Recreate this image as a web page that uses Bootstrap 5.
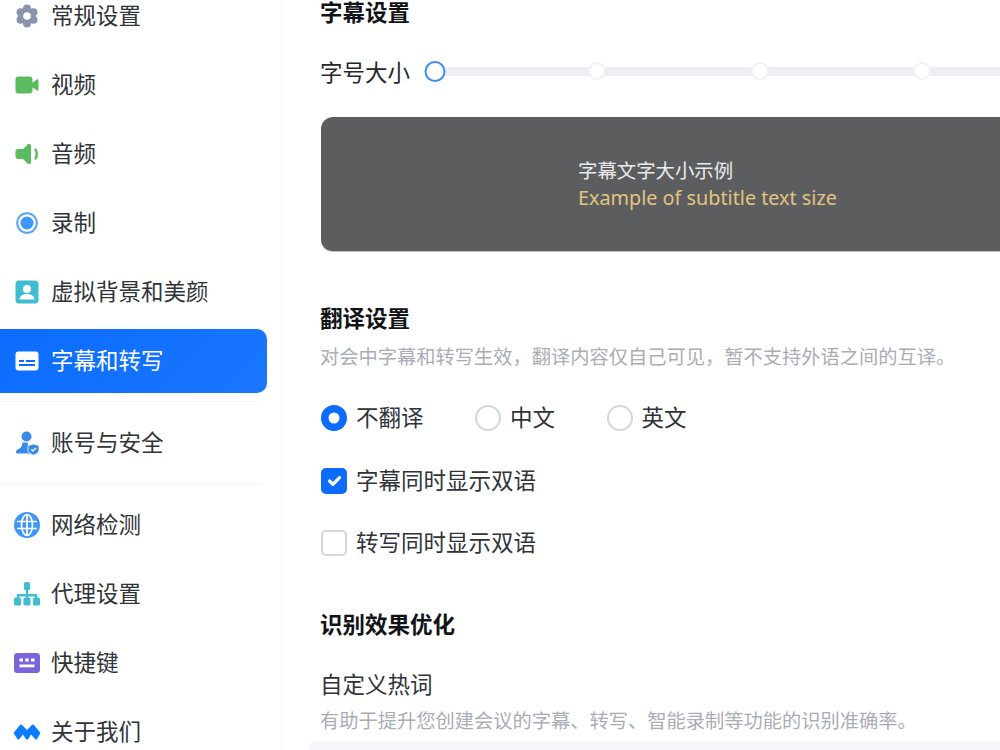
<!DOCTYPE html>
<html lang="zh-CN">
<head>
<meta charset="utf-8">
<title>字幕和转写</title>
<link href="https://cdn.jsdelivr.net/npm/bootstrap@5.3.0/dist/css/bootstrap.min.css" rel="stylesheet">
<style>
html,body{height:750px;overflow:hidden;background:#fff}
body{font-family:"Noto Sans","Noto Sans CJK SC",sans-serif;color:#26282c;font-size:22.5px;line-height:32px}
.shell{height:750px;overflow:hidden}
.side-pane{width:282px;flex:none;border-right:1px solid #f3f4f6;margin-top:-16px;padding-right:14px}
.side-row{height:64px;margin-bottom:5px;gap:12px;padding-left:15px;color:#303338}
.side-row.is-on{background:linear-gradient(135deg,#0b6cff,#1a76ff);color:#fff;border-radius:0 10px 10px 0}
.side-row svg{width:24px;height:24px;flex:none;overflow:visible}
.side-line{height:1px;background:#f5f6f7;margin:8px 4px 9px 0}
.main-pane{padding-left:39px;min-width:0;flex:1}
.sec-title{font-weight:700;font-size:22.5px;line-height:26px;color:#111317;margin-left:-1px}
.size-row{margin-top:31px;height:32px}
.size-label{width:115px;flex:none;margin-left:-1px}
.track-wrap{flex:1;height:32px;margin-right:-400px}
.track-bar{position:absolute;left:0;right:0;top:10px;height:9px;background:#eceef2}
.dot{position:absolute;top:5px;width:18px;height:18px;border-radius:50%;background:#fff;border:2px solid #f1f2f5;transform:translateX(-9px)}
.dot.is-cur{top:4px;width:21px;height:21px;border:2px solid #3d8bfd;transform:translateX(-10.5px)}
.sample-box{margin-top:28px;margin-right:-200px;height:135px;background:#5c5d5f;border-radius:12px 0 0 12px;border-bottom:1px solid #c6c7c9;padding:40px 0 0 257px;color:#e9ebee;font-size:19.4px;line-height:27px}
.sample-en{color:#e3c57f;font-size:19.8px;font-family:"Noto Sans",sans-serif}
.hint{color:#a9adb5;font-size:19.25px;line-height:28px;margin-left:-1px;margin-top:11px}
.sec2{margin-top:54px}
.opt-row{margin-top:31px;height:32px}
.opt{display:flex;align-items:center;margin:0;padding:0;min-height:0}
.opt .form-check-input{width:26px;height:26px;margin:0 9px 0 0;float:none;flex:none;border:2px solid #d3d6dd}
.opt .form-check-input:checked{background-color:#0b6cff;border-color:#0b6cff}
.opt .form-check-label{color:#303338}
.opt-row .opt + .opt{margin-left:51.5px}
.chk-row{margin-top:31px;height:32px}
.chk-row.second{margin-top:30px}
.chk-row .form-check-input{border-radius:5px}
.sec3{margin-top:53px}
.plain-label{margin-top:31px;color:#303338;margin-left:-1px}
.hint.tight{margin-top:6px}
.field-strip{height:12px;background:#f6f7fa;border-radius:8px 0 0 0;margin:6px -200px 0 -12px}
</style>
</head>
<body>
<div class="d-flex shell">
  <nav class="side-pane">
    <div class="side-row d-flex align-items-center">
      <svg viewBox="0 0 24 24"><g fill="#8a93ac"><circle cx="12" cy="12" r="8.500"/><circle cx="12" cy="4.500" r="4"/><circle cx="12" cy="19.500" r="4"/><circle cx="5.500" cy="8.200" r="4"/><circle cx="18.500" cy="8.200" r="4"/><circle cx="5.500" cy="15.800" r="4"/><circle cx="18.500" cy="15.800" r="4"/></g><circle cx="12" cy="12" r="3.800" fill="#fff"/></svg>
      <span>常规设置</span>
    </div>
    <div class="side-row d-flex align-items-center">
      <svg viewBox="0 0 24 24"><rect x="0.500" y="3.500" width="17" height="17" rx="3" fill="#5abb5f"/><path fill="#5abb5f" d="M17 10l5-3.500c.8-.5 1.500-.1 1.500.8v9.400c0 .9-.7 1.300-1.500.8L17 14z"/></svg>
      <span>视频</span>
    </div>
    <div class="side-row d-flex align-items-center">
      <svg viewBox="0 0 24 24"><path fill="#5abb5f" d="M0.500 9.500c0-1.500 1-2.500 2.500-2.500H8L12.500 2.500c1.500-1.300 3.500-.8 3.500 1.500v16c0 2.300-2 2.800-3.500 1.500L8 17H3c-1.500 0-2.500-1-2.500-2.500z"/><path fill="none" stroke="#5abb5f" stroke-width="2.400" stroke-linecap="round" d="M20.500 7.500c1.700 3 1.700 6 0 9"/></svg>
      <span>音频</span>
    </div>
    <div class="side-row d-flex align-items-center">
      <svg viewBox="0 0 24 24"><circle cx="12" cy="12" r="9.800" fill="none" stroke="#5aa6f5" stroke-width="2"/><circle cx="12" cy="12" r="6.500" fill="#3f97f5"/></svg>
      <span>录制</span>
    </div>
    <div class="side-row d-flex align-items-center">
      <svg viewBox="0 0 24 24"><rect x="0.500" y="0.500" width="23" height="23" rx="3.500" fill="#41bdd2"/><circle cx="12" cy="9" r="4" fill="#fff"/><path fill="#fff" d="M4.500 19.500c.5-4 3.500-5.500 7.500-5.500s7 1.500 7.500 5.500z"/></svg>
      <span>虚拟背景和美颜</span>
    </div>
    <div class="side-row is-on d-flex align-items-center">
      <svg viewBox="0 0 24 24"><rect x="0.500" y="2.500" width="23" height="19" rx="3" fill="#fff"/><rect x="4" y="11" width="5" height="2" fill="#0b6cff"/><rect x="11" y="11" width="9" height="2" fill="#0b6cff"/><rect x="4" y="15" width="16" height="2" fill="#0b6cff"/></svg>
      <span>字幕和转写</span>
    </div>
    <div class="side-line"></div>
    <div class="side-row d-flex align-items-center">
      <svg viewBox="0 0 24 24"><circle cx="11.500" cy="5.500" r="5" fill="#3a8be8"/><path fill="#3a8be8" d="M1 21c0-1.500 1-2.500 3-3.300 2-.8 3-2.200 3.400-6.200h5.200c.2 2 .8 3.400 2 4.300v4.700c0 .7.100 1.400.3 2H3c-1.200 0-2-.4-2-1.500z"/><path fill="#3a8be8" d="M18.500 13l5.500 1.500v4.700c0 2.500-2.800 4-5.500 5-2.700-1-5.500-2.500-5.500-5v-4.700z" stroke="#fff" stroke-width="0.800"/><path fill="none" stroke="#fff" stroke-width="1.300" d="M16.300 18.300l1.700 1.700 2.900-3"/></svg>
      <span>账号与安全</span>
    </div>
    <div class="side-line"></div>
    <div class="side-row d-flex align-items-center">
      <svg viewBox="0 0 24 24"><circle cx="12" cy="12" r="13" fill="#3f97f5"/><g fill="none" stroke="#fff" stroke-width="1.700"><ellipse cx="12" cy="12" rx="5.500" ry="10.500"/><path d="M12 1.500v21M2 8.500h20M2 15.500h20"/></g></svg>
      <span>网络检测</span>
    </div>
    <div class="side-row d-flex align-items-center">
      <svg viewBox="0 0 24 24"><rect x="9" y="0" width="6" height="8" rx="1.500" fill="#41bdd2"/><path fill="none" stroke="#41bdd2" stroke-width="2.400" d="M12 8v8M3 17v-3.800h18V17"/><rect x="-1" y="15.500" width="7" height="8" rx="1.500" fill="#41bdd2"/><rect x="8.500" y="15.500" width="7" height="8" rx="1.500" fill="#41bdd2"/><rect x="18" y="15.500" width="7" height="8" rx="1.500" fill="#41bdd2"/></svg>
      <span>代理设置</span>
    </div>
    <div class="side-row d-flex align-items-center">
      <svg viewBox="0 0 24 24"><rect x="-1" y="2" width="26" height="20" rx="3.500" fill="#7a63dc"/><g fill="#fff"><rect x="4.500" y="7.500" width="3.500" height="3"/><rect x="10.200" y="7.500" width="3.500" height="3"/><rect x="16" y="7.500" width="3.500" height="3"/><rect x="4.500" y="13.500" width="15" height="2.800"/></g></svg>
      <span>快捷键</span>
    </div>
    <div class="side-row d-flex align-items-center">
      <svg viewBox="0 0 24 24"><path fill="#0b7cff" d="M-1.500 13L5 5c.6-.7 1.500-.7 2.100 0l4.900 5 4.900-5c.6-.7 1.500-.7 2.100 0l6.500 8-3.500 6c-.5.7-1.300.7-1.900 0L16 14.500l-2.800 4.500c-.6.800-1.800.8-2.400 0L8 14.500 4.400 19c-.6.700-1.400.7-1.900 0z"/></svg>
      <span>关于我们</span>
    </div>
  </nav>
  <main class="main-pane">
    <div class="sec-title">字幕设置</div>
    <div class="size-row d-flex align-items-center">
      <span class="size-label">字号大小</span>
      <div class="track-wrap position-relative">
        <div class="track-bar"></div>
        <span class="dot is-cur" style="left:0"></span>
        <span class="dot" style="left:162px"></span>
        <span class="dot" style="left:325px"></span>
        <span class="dot" style="left:487px"></span>
      </div>
    </div>
    <div class="sample-box">
      <div>字幕文字大小示例</div>
      <div class="sample-en">Example of subtitle text size</div>
    </div>
    <div class="sec-title sec2">翻译设置</div>
    <div class="hint">对会中字幕和转写生效，翻译内容仅自己可见，暂不支持外语之间的互译。</div>
    <div class="opt-row d-flex align-items-center">
      <div class="form-check opt"><input class="form-check-input" type="radio" name="lang" id="l1" checked><label class="form-check-label" for="l1">不翻译</label></div>
      <div class="form-check opt"><input class="form-check-input" type="radio" name="lang" id="l2"><label class="form-check-label" for="l2">中文</label></div>
      <div class="form-check opt"><input class="form-check-input" type="radio" name="lang" id="l3"><label class="form-check-label" for="l3">英文</label></div>
    </div>
    <div class="chk-row form-check opt"><input class="form-check-input" type="checkbox" id="c1" checked><label class="form-check-label" for="c1">字幕同时显示双语</label></div>
    <div class="chk-row second form-check opt"><input class="form-check-input" type="checkbox" id="c2"><label class="form-check-label" for="c2">转写同时显示双语</label></div>
    <div class="sec-title sec3">识别效果优化</div>
    <div class="plain-label">自定义热词</div>
    <div class="hint tight">有助于提升您创建会议的字幕、转写、智能录制等功能的识别准确率。</div>
    <div class="field-strip"></div>
  </main>
</div>
<script src="https://cdn.jsdelivr.net/npm/bootstrap@5.3.0/dist/js/bootstrap.bundle.min.js"></script>
</body>
</html>
